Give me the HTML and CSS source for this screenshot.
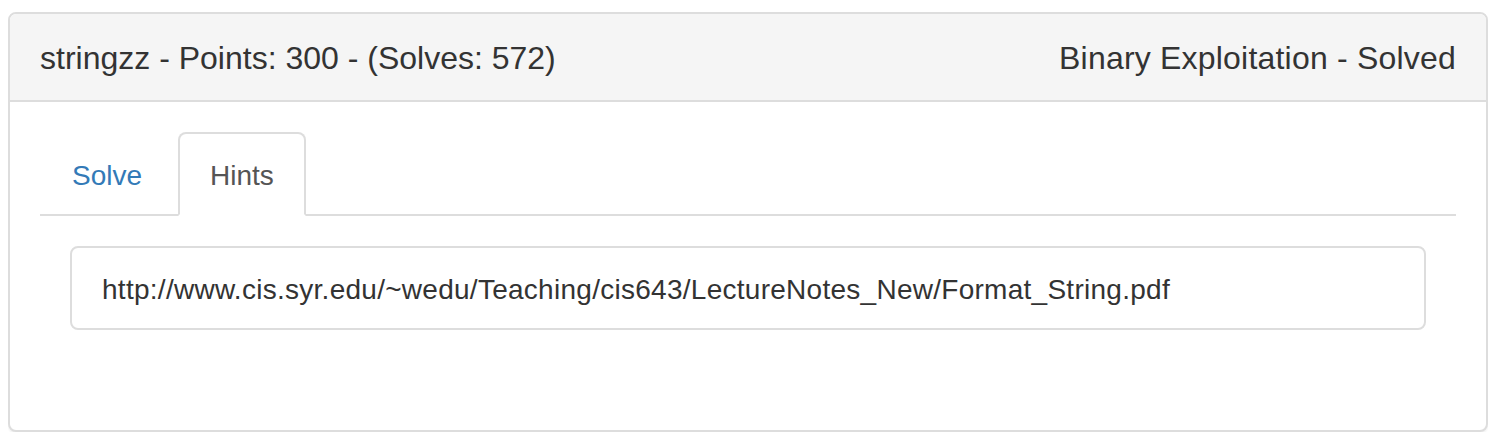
FILE: index.html
```html
<!DOCTYPE html>
<html lang="en">
<head>
<meta charset="utf-8">
<title>stringzz</title>
<link rel="stylesheet" href="styles.css">
</head>
<body>
<div class="panel">
  <div class="panel-heading">
    <span class="title">stringzz - Points: 300 - (Solves: 572)</span>
    <span class="category">Binary Exploitation - Solved</span>
  </div>
  <div class="panel-body">
    <ul class="nav-tabs">
      <li class="tab"><a href="#solve">Solve</a></li>
      <li class="tab active"><a href="#hints">Hints</a></li>
    </ul>
    <div class="tab-content">
      <ul class="list-group">
        <li class="list-group-item">http://www.cis.syr.edu/~wedu/Teaching/cis643/LectureNotes_New/Format_String.pdf</li>
      </ul>
    </div>
  </div>
</div>
</body>
</html>
```

FILE: styles.css
```css
* { box-sizing: border-box; }
html, body { background: #fff; }
body {
  margin: 12px 10px 8px 8px;
  font-family: "Liberation Sans", Arial, Helvetica, sans-serif;
  font-size: 28px;
  line-height: 1.42857;
  color: #333;
}
.panel {
  border: 2px solid #ddd;
  border-radius: 8px;
  background: #fff;
  box-shadow: 0 2px 2px rgba(0,0,0,.05);
}
.panel-heading {
  display: flex;
  justify-content: space-between;
  align-items: center;
  padding: 22px 30px 18px;
  background: #f5f5f5;
  border-bottom: 2px solid #ddd;
  border-radius: 6px 6px 0 0;
  font-size: 32px;
  line-height: 45.7px;
  color: #333;
}
.category {
  letter-spacing: 0.2px;
}
.panel-body {
  padding: 30px;
}
.nav-tabs {
  list-style: none;
  margin: 0;
  padding: 0;
  display: flex;
  border-bottom: 2px solid #ddd;
  height: 84px;
}
.tab {
  margin-right: 4px;
  margin-bottom: -2px;
}
.tab a {
  display: block;
  padding: 22px 30px 18px;
  line-height: 40px;
  border: 2px solid transparent;
  border-radius: 8px 8px 0 0;
  color: #337ab7;
  text-decoration: none;
}
.tab.active a {
  color: #555;
  background: #fff;
  border-color: #ddd;
  border-bottom-color: transparent;
}
.tab-content {
  padding: 30px;
}
.list-group {
  list-style: none;
  margin: 0 0 40px;
  padding: 0;
}
.list-group-item {
  padding: 22px 30px 18px;
  line-height: 40px;
  border: 2px solid #ddd;
  border-radius: 8px;
  color: #333;
  letter-spacing: 0.27px;
}
```
